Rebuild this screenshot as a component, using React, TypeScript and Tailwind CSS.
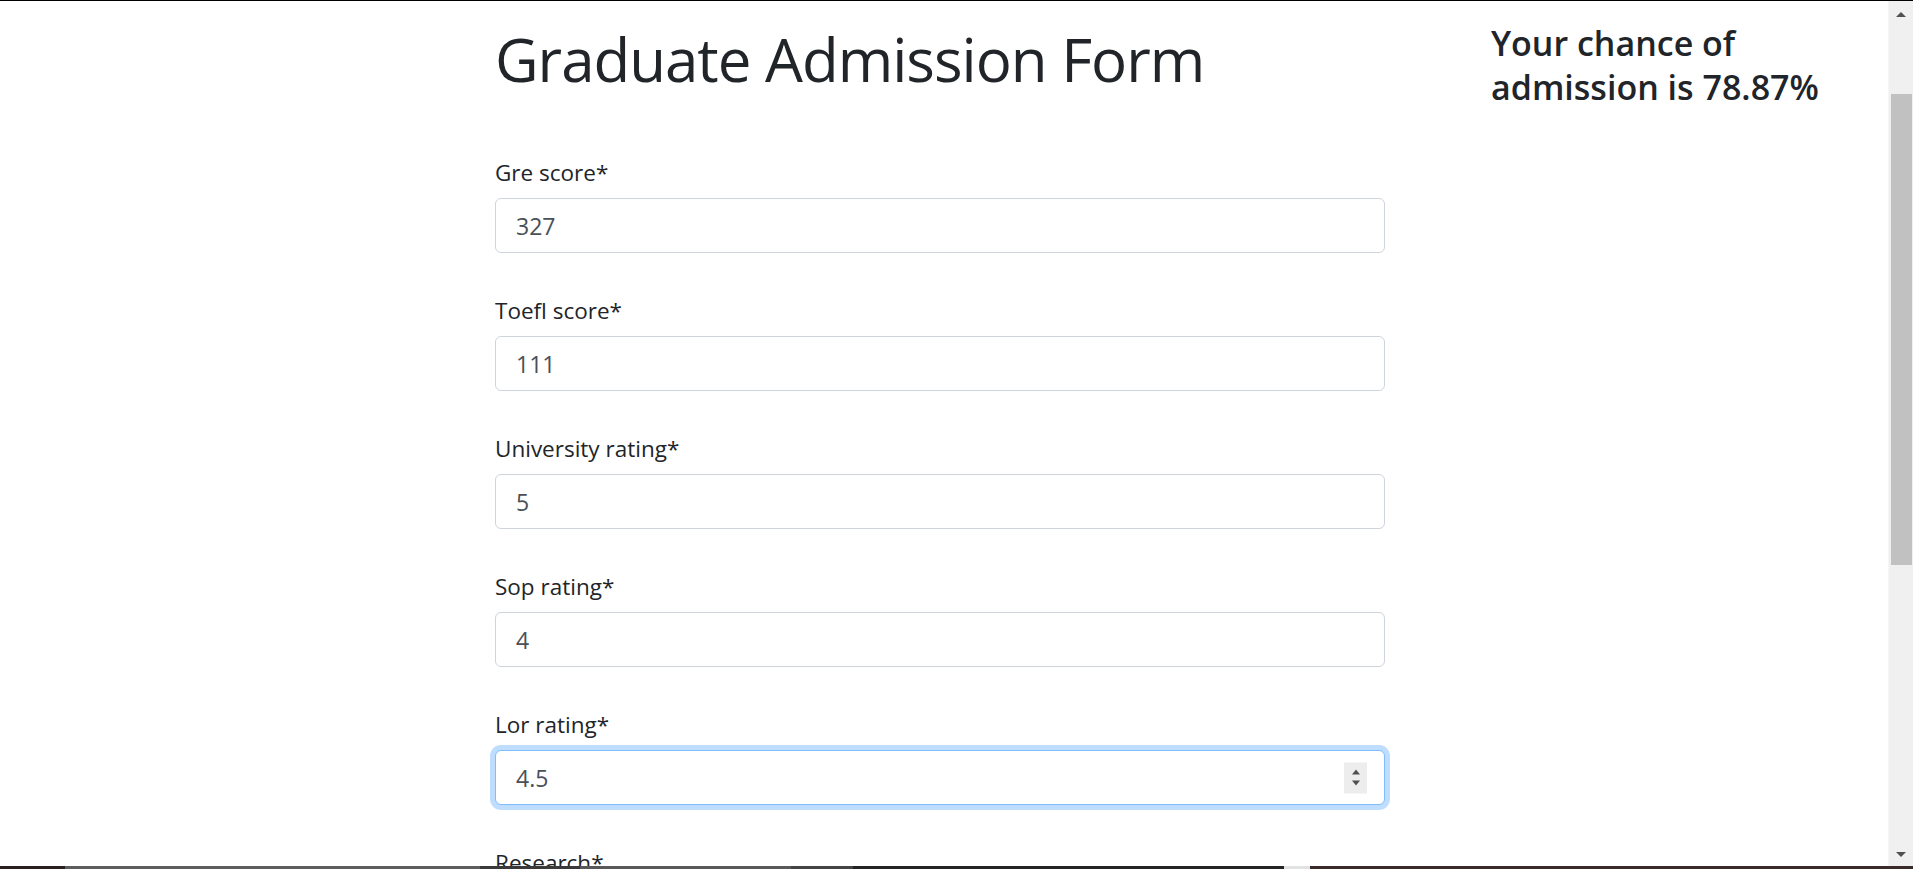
import React from 'react';

const fields = [
  { id: 'gre', label: 'Gre score*', value: '327' },
  { id: 'toefl', label: 'Toefl score*', value: '111' },
  { id: 'university', label: 'University rating*', value: '5' },
  { id: 'sop', label: 'Sop rating*', value: '4' },
  { id: 'lor', label: 'Lor rating*', value: '4.5', focused: true },
  { id: 'research', label: 'Research*', value: '1' },
];

// segments of the strip along the bottom edge of the capture
const strip = [
  { w: 'w-[65px]', c: 'bg-[#2b2020]' },
  { w: 'w-[415px]', c: 'bg-[#5e5e5e]' },
  { w: 'w-[100px]', c: 'bg-[#3a3a3a]' },
  { w: 'w-[211px]', c: 'bg-[#595959]' },
  { w: 'w-[62px]', c: 'bg-[#444444]' },
  { w: 'w-[431px]', c: 'bg-[#242424]' },
  { w: 'w-[26px]', c: 'bg-[#e2e2e2]' },
  { w: 'flex-1', c: 'bg-[#3a2b2b]' },
];

function Spinner() {
  return (
    <div className="absolute right-[18px] top-1/2 -translate-y-1/2 w-[23px] h-[31px] bg-[#ededed] flex flex-col items-center justify-center gap-[6px]">
      <div className="w-0 h-0 border-x-[4px] border-x-transparent border-b-[5px] border-b-[#505050]" />
      <div className="w-0 h-0 border-x-[4px] border-x-transparent border-t-[5px] border-t-[#505050]" />
    </div>
  );
}

function Field({ field }: { field: any }) {
  return (
    <div className="mb-[40px]">
      <label htmlFor={field.id} className="block text-[22.5px] leading-[36px] text-[#212529] mb-[7px]">
        {field.label}
      </label>
      <div className="relative">
        <input
          id={field.id}
          type="text"
          readOnly
          value={field.value}
          className={
            field.focused
              ? 'block w-full h-[55px] px-[20px] rounded-[6px] border border-[#80bdff] ring-[5px] ring-[#bfdeff] outline-none text-[23px] text-[#495057] bg-white'
              : 'block w-full h-[55px] px-[20px] rounded-[6px] border border-[#ced4da] outline-none text-[23px] text-[#495057] bg-white'
          }
        />
        {field.focused && <Spinner />}
      </div>
    </div>
  );
}

function Scrollbar() {
  return (
    <div className="w-[25px] shrink-0 bg-[#f0f0f0] border-l border-[#f6f6f6] flex flex-col items-center">
      <div className="h-[27px] flex items-center justify-center">
        <div className="w-0 h-0 border-x-[5px] border-x-transparent border-b-[5px] border-b-[#505050]" />
      </div>
      <div className="mt-[66px] w-[21px] h-[471px] bg-[#c1c1c1]" />
      <div className="mt-auto h-[24px] flex items-center justify-center">
        <div className="w-0 h-0 border-x-[5px] border-x-transparent border-t-[5px] border-t-[#505050]" />
      </div>
    </div>
  );
}

export default function App() {
  return (
    <div className="h-[869px] w-full overflow-hidden flex flex-col bg-white font-['Open_Sans',sans-serif]">
      <div className="h-px bg-black shrink-0" />
      <div className="flex flex-1 min-h-0">
        <main className="flex-1 overflow-hidden">
          <div className="flex pl-[495px]">
            <div className="w-[890px] shrink-0">
              <h1 className="mt-[20px] text-[60px] leading-[76px] font-medium tracking-[-1px] text-[#212529]">
                Graduate Admission Form
              </h1>
              <form className="mt-[58px]">
                {fields.map((f) => (
                  <Field key={f.id} field={f} />
                ))}
              </form>
            </div>
            <aside className="ml-[106px] w-[360px] pt-[20px]">
              <h4 className="text-[34px] leading-[44px] font-semibold text-[#212529]">
                Your chance of admission is 78.87%
              </h4>
            </aside>
          </div>
        </main>
        <Scrollbar />
      </div>
      <div className="h-[3px] shrink-0 flex">
        {strip.map((s, i) => (
          <div key={i} className={`${s.w} ${s.c} h-full`} />
        ))}
      </div>
    </div>
  );
}
